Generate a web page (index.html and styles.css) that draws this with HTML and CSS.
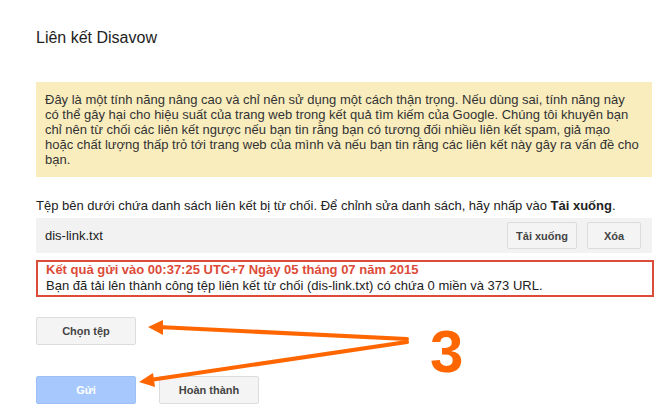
FILE: index.html
```html
<!DOCTYPE html>
<html lang="vi">
<head>
<meta charset="utf-8">
<title>Liên kết Disavow</title>
<link rel="stylesheet" href="styles.css">
</head>
<body>
<div class="page">
  <h1 class="title">Liên kết Disavow</h1>
  <div class="notice">Đây là một tính năng nâng cao và chỉ nên sử dụng một cách thận trọng. Nếu dùng sai, tính năng này<br>có thể gây hại cho hiệu suất của trang web trong kết quả tìm kiếm của Google. Chúng tôi khuyên bạn<br>chỉ nên từ chối các liên kết ngược nếu bạn tin rằng bạn có tương đối nhiều liên kết spam, giả mạo<br>hoặc chất lượng thấp trỏ tới trang web của mình và nếu bạn tin rằng các liên kết này gây ra vấn đề cho<br>bạn.</div>
  <p class="intro">Tệp bên dưới chứa danh sách liên kết bị từ chối. Để chỉnh sửa danh sách, hãy nhấp vào <b>Tải xuống</b>.</p>
  <div class="filerow">
    <span class="filename">dis-link.txt</span>
    <button class="btn">Tải xuống</button>
    <button class="btn">Xóa</button>
  </div>
  <div class="result">
    <div class="result-title">Kết quả gửi vào 00:37:25 UTC+7 Ngày 05 tháng 07 năm 2015</div>
    <div class="result-body">Bạn đã tải lên thành công tệp liên kết từ chối (dis-link.txt) có chứa 0 miền và 373 URL.</div>
  </div>
  <button class="btn btn-wide choose">Chọn tệp</button>
  <div class="submit-row">
    <button class="btn btn-wide btn-blue">Gửi</button>
    <button class="btn btn-wide">Hoàn thành</button>
  </div>
</div>
<svg class="annot" width="666" height="415" viewBox="0 0 666 415">
  <g stroke="#ff6600" stroke-width="4" stroke-linecap="round" fill="none">
    <line x1="407" y1="339" x2="158" y2="327"/>
    <line x1="407" y1="342" x2="150" y2="380"/>
  </g>
  <g fill="#ff6600">
    <polygon points="148,327 163,320 163,335"/>
    <polygon points="139,382 153,373 155,387"/>
  </g>
</svg>
<span class="three">3</span>
</body>
</html>
```
FILE: styles.css
```css
html, body {
  margin: 0;
  padding: 0;
  background: #fff;
}
body {
  font-family: "Liberation Sans", Arial, sans-serif;
  font-size: 13px;
  color: #222;
  width: 666px;
  height: 415px;
  position: relative;
  overflow: hidden;
}
.page {
  width: 616px;
  padding: 28px 0 0 36px;
}
.title {
  margin: 0;
  font-size: 16px;
  font-weight: normal;
  line-height: 20px;
  color: #222;
}
.notice {
  margin-top: 34px;
  background: #f9edbe;
  padding: 10px 9px;
  line-height: 15px;
  color: #333;
  white-space: nowrap;
}
.intro {
  margin: 21px 0 0;
  line-height: 15px;
  color: #222;
}
.filerow {
  margin-top: 5px;
  height: 35px;
  background: #f2f2f2;
  display: flex;
  align-items: center;
  gap: 10px;
  padding: 0 11px 0 9px;
}
.filename {
  flex: 1;
}
.btn {
  box-sizing: border-box;
  height: 27px;
  min-width: 54px;
  padding: 0 8px;
  border: 1px solid #dcdcdc;
  border-radius: 2px;
  background: #f4f4f4;
  color: #444;
  font-family: "Liberation Sans", Arial, sans-serif;
  font-size: 11px;
  font-weight: bold;
}
.result {
  margin-top: 7px;
  border: 2px solid #dd4b39;
  padding: 0 8px;
  box-sizing: border-box;
  width: 618px;
}
.result-title {
  color: #dd4b39;
  font-weight: bold;
  line-height: 15px;
}
.result-body {
  line-height: 18px;
}
.btn-wide {
  width: 100px;
  height: 28px;
}
.choose {
  display: block;
  margin-top: 20px;
}
.submit-row {
  margin-top: 31px;
  display: flex;
  gap: 23px;
}
.btn-blue {
  background: #a6c8fd;
  border-color: #9cc0f8;
  color: #fff;
}
.annot {
  position: absolute;
  left: 0;
  top: 0;
  pointer-events: none;
}
.three {
  position: absolute;
  left: 430px;
  top: 322px;
  font-family: "Liberation Sans", Arial, sans-serif;
  font-weight: bold;
  font-size: 60px;
  line-height: 60px;
  color: #ff6600;
}
```
